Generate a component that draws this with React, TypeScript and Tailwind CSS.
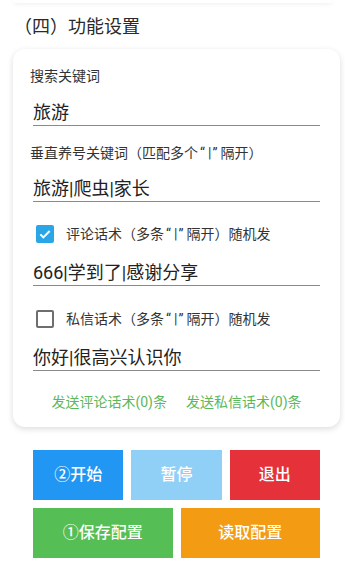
import React from "react";

const font = { fontFamily: 'Roboto, "Noto Sans CJK SC", "Noto Sans", sans-serif' };

function Q() {
  return (
    <>
      <span className="ml-[2px] mr-[3px]">“</span>|<span className="ml-[1px] mr-[3px]">”</span>
    </>
  );
}

function Field({ value, className = "" }: { value: string; className?: string }) {
  return (
    <div
      className={`mx-[20px] border-b border-[#8a8a8a] text-[18px] leading-[24px] text-[#222] ${className}`}
    >
      {value}
    </div>
  );
}

function Check({ checked, label, className = "" }: { checked: boolean; label: string; className?: string }) {
  return (
    <div className={`ml-[23px] flex h-[24px] items-center gap-[12px] ${className}`}>
      {checked ? (
        <span className="flex h-[18px] w-[18px] items-center justify-center rounded-[2px] bg-[#2aa5e6]">
          <svg viewBox="0 0 24 24" className="h-[16px] w-[16px]" fill="none" stroke="white" strokeWidth="3">
            <path d="M5 12.5l4.5 4.5L19 7.5" />
          </svg>
        </span>
      ) : (
        <span className="h-[18px] w-[18px] rounded-[2px] border-2 border-[#6e6e6e]" />
      )}
      <span className="text-[14px] leading-[20px] text-[#333]">
        {label}（多条<Q />隔开）随机发
      </span>
    </div>
  );
}

export default function App() {
  return (
    <div className="flex h-[567px] w-full flex-col overflow-hidden bg-white" style={font}>
      {/* previous card edge */}
      <div className="mx-[13px] h-[3px] rounded-b-[12px] bg-white shadow-[0_1px_4px_rgba(0,0,0,0.08)]" />

      <div className="ml-[14px] mt-[12px] text-[18px] leading-[24px] text-[#2a2a2a]">（四）功能设置</div>

      <div className="mx-[13px] mt-[10px] w-[327px] rounded-[12px] bg-white pb-[15px] pt-[17px] shadow-[0_2px_6px_rgba(0,0,0,0.14)]">
        <div className="ml-[17px] text-[14px] leading-[20px] text-[#333]">搜索关键词</div>
        <Field value="旅游" className="mt-[15px]" />

        <div className="ml-[17px] mt-[17px] text-[14px] leading-[20px] text-[#333]">
          垂直养号关键词（匹配多个<Q />隔开）
        </div>
        <Field value="旅游|爬虫|家长" className="mt-[14px]" />

        <Check checked label="评论话术" className="mt-[20px]" />
        <Field value="666|学到了|感谢分享" className="mt-[15px]" />

        <Check checked={false} label="私信话术" className="mt-[21px]" />
        <Field value="你好|很高兴认识你" className="mt-[15px]" />

        <div className="mt-[21px] flex justify-center gap-[19px] text-[14px] leading-[20px] text-[#5cb85c]">
          <span>发送评论话术(0)条</span>
          <span>发送私信话术(0)条</span>
        </div>
      </div>

      <div className="ml-[33px] mt-[23px] flex w-[287px] flex-col gap-[8px] text-[16px] font-medium text-white">
        <div className="flex h-[50px] gap-[8px]">
          <button className="flex-1 bg-[#2196f3]">②开始</button>
          <button className="flex-1 bg-[#90d0f6]">暂停</button>
          <button className="flex-1 bg-[#e5323a]">退出</button>
        </div>
        <div className="flex h-[50px] gap-[8px]">
          <button className="flex-1 bg-[#55be54]">①保存配置</button>
          <button className="flex-1 bg-[#f39b12]">读取配置</button>
        </div>
      </div>
    </div>
  );
}
